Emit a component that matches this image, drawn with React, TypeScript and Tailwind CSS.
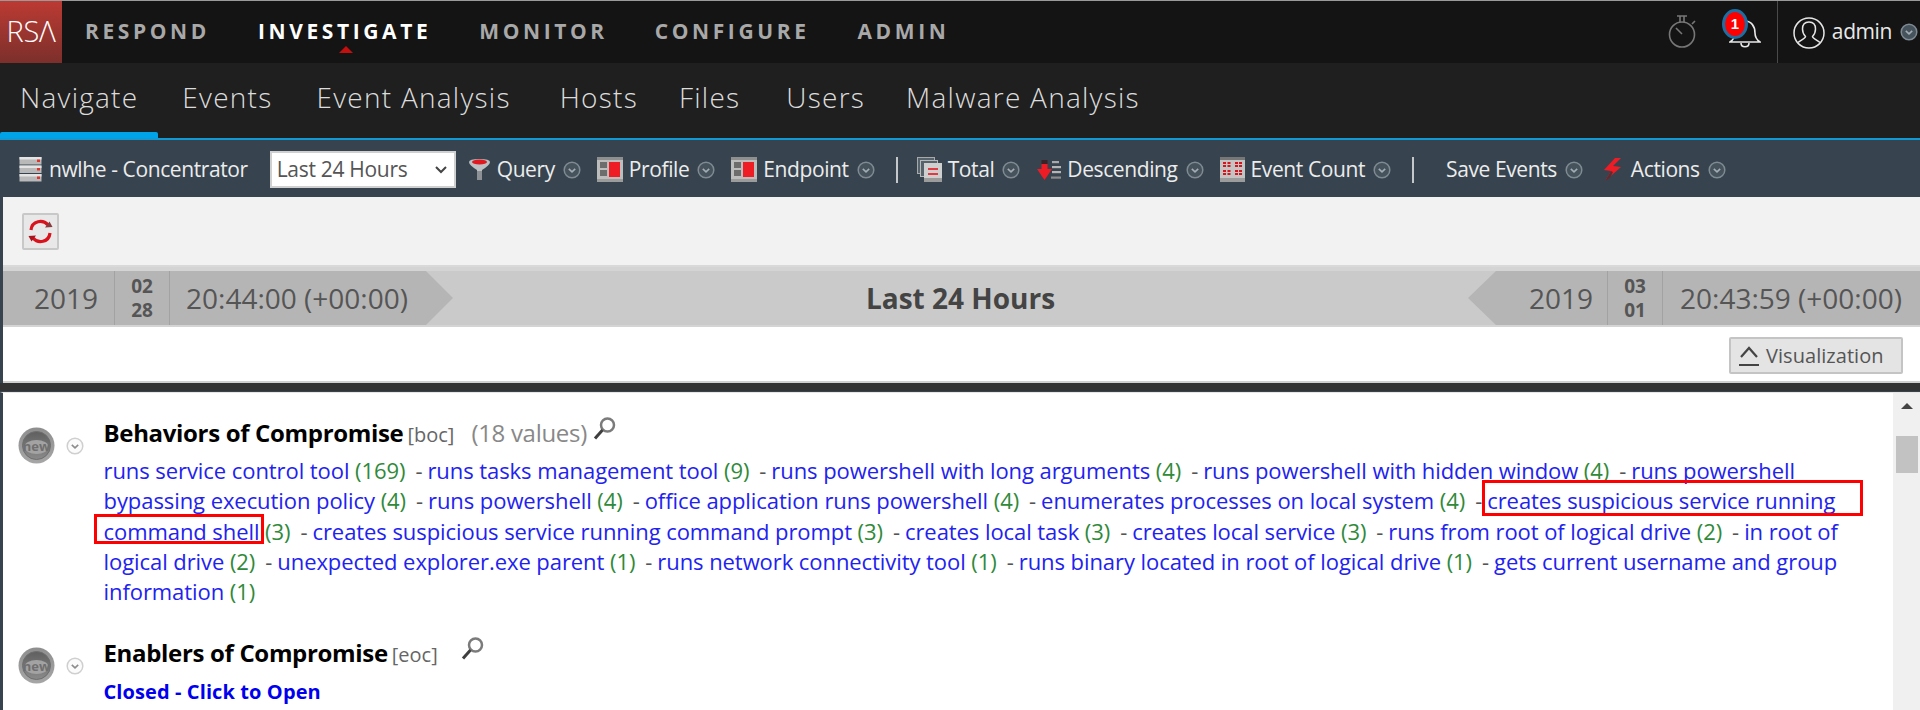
import React from "react";

const Chev = ({ dark = false, cls = "" }: { dark?: boolean; cls?: string }) => (
  <svg width="18" height="18" viewBox="0 0 18 18" className={"shrink-0 " + cls}>
    <circle cx="9" cy="9" r="7.8" fill={dark ? "#46525c" : "#fbfbfb"} stroke={dark ? "#7f8a93" : "#cfcfcf"} strokeWidth="1.5" />
    <path d="M5.8 7.8 9 10.800l3.200-3" fill="none" stroke={dark ? "#a3adb5" : "#8c8c8c"} strokeWidth="1.6" />
  </svg>
);

const ServerIcon = () => (
  <svg width="23" height="25" viewBox="0 0 23 25" className="shrink-0">
    {[0, 8.5, 17].map((y) => (
      <g key={y}>
        <rect x="0.5" y={y} width="22" height="7.5" fill="#b9b9b9" />
        <rect x="0.5" y={y} width="22" height="2.5" fill="#e4e4e4" />
        <rect x="18" y={y + 2.5} width="3" height="2.5" fill="#e2342c" />
      </g>
    ))}
  </svg>
);
const FunnelIcon = () => (
  <svg width="23" height="23" viewBox="0 0 23 23" className="shrink-0">
    <path d="M1 4Q1 1 11.500 1T22 4Q22 7 14 12V22H9V12Q1 7 1 4Z" fill="#bcc0c3" />
    <ellipse cx="11.500" cy="4" rx="7.500" ry="2.500" fill="#e0181f" />
    <path d="M9 13h5v9H9Z" fill="#8d9094" />
  </svg>
);
const PanelIcon = () => (
  <svg width="26" height="25" viewBox="0 0 26 25" className="shrink-0">
    <rect width="26" height="25" rx="1" fill="#bdbdbd" />
    <rect width="26" height="3" fill="#8f8f8f" />
    <rect x="3" y="5" width="7" height="6" fill="#6d6d6d" />
    <rect x="3" y="13" width="7" height="6" fill="#6d6d6d" />
    <rect x="12" y="5" width="11" height="15" fill="#ee1c25" />
    <rect y="22" width="26" height="3" fill="#9c9c9c" />
  </svg>
);
const TotalIcon = () => (
  <svg width="25" height="25" viewBox="0 0 25 25" className="shrink-0">
    <rect x="0.500" y="0.500" width="17" height="16" fill="#56626c" stroke="#a9a9a9" />
    <rect x="3.500" y="3.500" width="17" height="16" fill="#56626c" stroke="#b9b9b9" />
    <rect x="7" y="6" width="18" height="19" fill="#cfcfcf" />
    <rect x="11" y="11" width="10" height="2" fill="#e23a42" />
    <rect x="11" y="16" width="10" height="2" fill="#e23a42" />
    <rect x="7" y="21" width="18" height="4" fill="#9c9c9c" />
  </svg>
);
const SortIcon = () => (
  <svg width="24" height="20" viewBox="0 0 24 20" className="shrink-0">
    <rect x="4.500" y="0" width="6" height="4" fill="#3b2226" />
    <rect x="4.500" y="4" width="6" height="6" fill="#ee1c25" />
    <path d="M0 9h15L7.500 20Z" fill="#ee1c25" />
    <rect x="15" y="1" width="7" height="2.200" fill="#a9a9a9" />
    <rect x="15" y="6" width="9" height="2.200" fill="#b5b5b5" />
    <rect x="15" y="11" width="9" height="2.200" fill="#b5b5b5" />
    <rect x="14" y="16.500" width="10" height="2.200" fill="#8b8b8b" />
  </svg>
);
const CountIcon = () => (
  <svg width="25" height="25" viewBox="0 0 25 25" className="shrink-0">
    <rect width="25" height="25" rx="1" fill="#c4c4c4" />
    <rect width="25" height="3" fill="#777" />
    {[5, 8, 13, 16].map((y) =>
      [3, 7.500, 15, 19].map((x) => <rect key={x + "-" + y} x={x} y={y} width="3" height="2" fill="#d7131c" />)
    )}
    <rect y="21" width="25" height="4" fill="#9c9c9c" />
  </svg>
);
const BoltIcon = () => (
  <svg width="24" height="24" viewBox="0 0 24 24" className="shrink-0">
    <path d="M14 0 3 12l7 1-6 10 16-14-8-1 8-8Z" fill="#ee1c25" />
    <path d="M10 13 4 23l5-3 3-6Z" fill="#5d2c31" />
  </svg>
);
const Magnifier = ({ cls = "" }: { cls?: string }) => (
  <svg width="24" height="25" viewBox="0 0 24 25" className={"shrink-0 " + cls}>
    <circle cx="14.500" cy="9" r="6.500" fill="#fff" stroke="#7b7b7b" strokeWidth="2.500" />
    <path d="M9.500 14 2 22.500" stroke="#3f3f3f" strokeWidth="3" />
  </svg>
);
const Sphere = ({ id }: { id: string }) => (
  <svg width="37" height="37" viewBox="0 0 37 37" className="shrink-0">
    <defs>
      <linearGradient id={id + "a"} x1="0" y1="0" x2="0" y2="1">
        <stop offset="0%" stopColor="#8e8e8e" />
        <stop offset="100%" stopColor="#a6a6a6" />
      </linearGradient>
      <linearGradient id={id + "b"} x1="0" y1="0" x2="0" y2="1">
        <stop offset="0%" stopColor="#5f5f5f" />
        <stop offset="100%" stopColor="#8a8a8a" />
      </linearGradient>
    </defs>
    <circle cx="18.500" cy="18.500" r="18" fill={"url(#" + id + "a)"} />
    <circle cx="18.500" cy="18.500" r="14" fill={"url(#" + id + "b)"} stroke="#6e6e6e" strokeWidth="1" />
    <ellipse cx="18.500" cy="20" rx="12" ry="7" fill="#a3a3a3" />
    <text x="18.500" y="24" textAnchor="middle" fontSize="13" fontWeight="700" fill="#6f6f6f" fontFamily="Open Sans, sans-serif">
      new
    </text>
  </svg>
);

type TB = { ml: string; icon?: React.ReactNode; label: string };
const Tool = ({ ml, icon, label }: TB) => (
  <div className={"flex items-center shrink-0 " + ml}>
    {icon}
    <span className={"text-[21px] tracking-[-0.4px] text-[#ececec] " + (icon ? "ml-[6px]" : "")}>{label}</span>
    <Chev dark cls="ml-[8px]" />
  </div>
);

const Blue = ({ children }: { children: React.ReactNode }) => <span className="text-[#2222f0]">{children}</span>;
const Count = ({ children }: { children: React.ReactNode }) => <span className="text-[#2f8a3a]">{children}</span>;
const Dash = () => <span className="text-[#555555] ml-[10px] mr-[5px]">-</span>;
const Item = ({ t, n, last = false }: { t: string; n: number; last?: boolean }) => (
  <>
    <Blue>{t}</Blue> <Count>({n})</Count>
    {!last && <Dash />}
  </>
);

const Section = ({ id, children }: { id: string; children: React.ReactNode }) => (
  <div className="flex">
    <div className="w-[37px] ml-[18px] shrink-0 flex items-start">
      <Sphere id={id} />
    </div>
    <div className="w-[18px] ml-[11px] shrink-0 pt-[10px]">
      <Chev />
    </div>
    <div className="ml-[19.5px] flex-1 min-w-0">{children}</div>
  </div>
);

export default function App() {
  return (
    <div className="w-[1920px] h-[710px] overflow-hidden flex flex-col bg-white font-['Open_Sans',sans-serif]">
      {/* top bar */}
      <header className="h-[63px] shrink-0 flex items-center bg-[#141414] border-t border-t-[#9a9a9a]">
        <div className="w-[62px] h-full flex items-center justify-center pb-[3px] bg-gradient-to-b from-[#bc3a33] to-[#7c2f2b] text-white text-[29px] font-light tracking-[-0.3px]">
          RSΛ
        </div>
        <nav className="flex items-center font-bold text-[21px] tracking-[3.6px] text-[#a8a8a8]">
          <span className="ml-[23px]">RESPOND</span>
          <span className="ml-[48px] relative text-white">
            INVESTIGATE
            <span className="absolute left-[81px] top-[30px] w-0 h-0 border-x-[7px] border-x-transparent border-b-[7px] border-b-[#c40f0f]" />
          </span>
          <span className="ml-[48px]">MONITOR</span>
          <span className="ml-[47px]">CONFIGURE</span>
          <span className="ml-[48px]">ADMIN</span>
        </nav>
        <div className="ml-auto flex items-center h-full">
          <svg width="28" height="33" viewBox="0 0 28 33" className="mr-[26px] -mt-[1px]">
            <circle cx="14" cy="19.500" r="12.500" fill="none" stroke="#777" strokeWidth="1.600" />
            <path d="M9 1h10M12 1v6M16 1v6M24 9l3-3M14 19 8 13" fill="none" stroke="#777" strokeWidth="1.600" />
          </svg>
          <div className="relative w-[55px] h-full">
            <svg width="32" height="28" viewBox="0 0 32 28" className="absolute left-[7px] top-[19px]">
              <path d="M1 22h30c-3-2-5-4-5-9 0-7-4-12-10-12S6 6 6 13c0 5-2 7-5 9ZM12 23c0 5 8 5 8 0" fill="none" stroke="#e8e8e8" strokeWidth="1.600" />
            </svg>
            <span className="absolute left-0 top-[8px] w-[26px] h-[30px] rounded-[50%] bg-[#ff0000] border-[3px] border-[#1d6fa3] flex items-center justify-center text-white text-[15px] font-bold font-['Liberation_Sans',sans-serif]">
              1
            </span>
          </div>
          <div className="w-px h-full bg-[#4a4a4a]" />
          <svg width="32" height="32" viewBox="0 0 32 32" className="ml-[15px] mt-[1px]">
            <circle cx="16" cy="16" r="15" fill="none" stroke="#e6e6e6" strokeWidth="1.500" />
            <path d="M16 5c-4.500 0-6.500 3-6.500 7 0 3.500 1.500 6 3 7.500 0 1.500-3 3-7.500 6M16 5c4.500 0 6.500 3 6.500 7 0 3.500-1.500 6-3 7.500 0 1.500 3 3 7.500 6" fill="none" stroke="#e6e6e6" strokeWidth="1.500" />
          </svg>
          <span className="ml-[7px] text-[21px] tracking-[-0.4px] text-[#e8e8e8]">admin</span>
          <Chev dark cls="ml-[8px] mr-[2px]" />
        </div>
      </header>

      {/* sub nav */}
      <div className="h-[75px] shrink-0 flex items-center pb-[7px] bg-[#1f1f1f] relative text-[28px] font-light tracking-[1.25px] text-[#dcdcdc]">
        <span className="ml-[20px]">Navigate</span>
        <span className="ml-[44px]">Events</span>
        <span className="ml-[44px]">Event Analysis</span>
        <span className="ml-[49px]">Hosts</span>
        <span className="ml-[41px]">Files</span>
        <span className="ml-[46px]">Users</span>
        <span className="ml-[41px]">Malware Analysis</span>
        <span className="absolute left-0 bottom-0 w-[158px] h-[6px] bg-[#00a3e8] rounded-t-[2px]" />
      </div>
      <div className="h-[2px] shrink-0 bg-[#0f9ad6]" />

      {/* toolbar */}
      <div className="h-[56px] shrink-0 flex items-center pt-[3px] bg-[#37444f]">
        <div className="ml-[19px] flex items-center shrink-0">
          <ServerIcon />
          <span className="ml-[7px] text-[21px] tracking-[-0.4px] text-[#ececec]">nwlhe - Concentrator</span>
        </div>
        <div className="ml-[22px] w-[186px] h-[37px] shrink-0 relative">
          <select
            defaultValue="Last 24 Hours"
            className="w-full h-full appearance-none bg-white border-2 border-[#d0d0d0] pl-[5px] text-[21px] tracking-[-0.3px] text-[#555555] outline-none"
          >
            <option>Last 24 Hours</option>
          </select>
          <svg width="12" height="8" viewBox="0 0 12 8" className="absolute right-[9px] top-[15px] pointer-events-none">
            <path d="M1 1l5 5 5-5" fill="none" stroke="#444" strokeWidth="2" />
          </svg>
        </div>
        <Tool ml="ml-[12px]" icon={<FunnelIcon />} label="Query" />
        <Tool ml="ml-[16px]" icon={<PanelIcon />} label="Profile" />
        <Tool ml="ml-[16px]" icon={<PanelIcon />} label="Endpoint" />
        <div className="ml-[21px] w-[2px] h-[26px] bg-[#c4c8cb] shrink-0" />
        <Tool ml="ml-[19px]" icon={<TotalIcon />} label="Total" />
        <Tool ml="ml-[17px]" icon={<SortIcon />} label="Descending" />
        <Tool ml="ml-[16px]" icon={<CountIcon />} label="Event Count" />
        <div className="ml-[21px] w-[2px] h-[26px] bg-[#c4c8cb] shrink-0" />
        <Tool ml="ml-[32px]" label="Save Events" />
        <Tool ml="ml-[18px]" icon={<BoltIcon />} label="Actions" />
      </div>

      {/* time panel */}
      <div className="h-[197px] shrink-0 flex flex-col bg-[#37444f] pl-[3px]">
        <div className="h-[1px] shrink-0" />
        <div className="h-[70px] shrink-0 bg-[#f2f2f2] flex items-start pl-[19px] pt-[16px] border-b-2 border-b-[#d9d9d9]">
          <button className="w-[37px] h-[37px] bg-[#e8e8e8] border-2 border-[#c8c8c8] rounded-[2px] flex items-center justify-center">
            <svg width="25" height="25" viewBox="0 0 25 25" className="shrink-0">
              <path d="M3 11C4 1.500 15 0 20 6" fill="none" stroke="#d9121c" strokeWidth="3.200" />
              <path d="M17 8.500 24.500 8 21.500 2.500Z" fill="#8a3a3e" />
              <path d="M22 14C21 23.500 10 25 5 19" fill="none" stroke="#d9121c" strokeWidth="3.200" />
              <path d="M8 16.500.5 17l3 5.500Z" fill="#a8141c" />
            </svg>
          </button>
        </div>
        <div className="h-[60px] shrink-0 bg-[#cacaca] flex items-stretch border-t-[4px] border-t-[#d4d4d4] border-b-2 border-b-[#d4d4d4] text-[#555555] text-[28px]">
          <div className="flex items-center bg-[#b5b5b5]">
            <div className="w-[112px] h-full flex items-center justify-end pr-[16px] border-r border-r-[#a2a2a2]">2019</div>
            <div className="w-[55px] h-full flex flex-col items-center justify-center border-r border-r-[#a2a2a2] text-[19px] leading-[24px] font-bold text-[#555555]">
              <span>02</span>
              <span>28</span>
            </div>
            <div className="w-[256px] h-full flex items-center pl-[16px] whitespace-nowrap">20:44:00 (+00:00)</div>
          </div>
          <div className="w-0 h-0 border-y-[27px] border-y-transparent border-l-[27px] border-l-[#b5b5b5]" />
          <div className="flex-1 flex items-center justify-center font-bold text-[28px] text-[#444444]">Last 24 Hours</div>
          <div className="w-0 h-0 border-y-[27px] border-y-transparent border-r-[28px] border-r-[#b5b5b5]" />
          <div className="flex items-center bg-[#b5b5b5]">
            <div className="w-[112px] h-full flex items-center justify-end pr-[14px] border-r border-r-[#a2a2a2]">2019</div>
            <div className="w-[55px] h-full flex flex-col items-center justify-center border-r border-r-[#a2a2a2] text-[19px] leading-[24px] font-bold text-[#555555]">
              <span>03</span>
              <span>01</span>
            </div>
            <div className="w-[257px] h-full flex items-center pl-[17px] whitespace-nowrap">20:43:59 (+00:00)</div>
          </div>
        </div>
        <div className="h-[56px] shrink-0 bg-white flex items-start justify-end pr-[17px] pt-[10px] border-b-2 border-b-[#d0d0d0]">
          <button className="w-[174px] h-[37px] bg-[#e4e4e4] border-2 border-[#c4c4c4] rounded-[2px] flex items-center pl-[6px] text-[#555555] text-[20px] tracking-[0.05px]">
            <svg width="24" height="24" viewBox="0 0 24 24" className="shrink-0">
              <path d="M4 13 12 4l8 9" fill="none" stroke="#444" strokeWidth="2.200" />
              <path d="M2 21h20" stroke="#444" strokeWidth="2" />
            </svg>
            <span className="ml-[5px]">Visualization</span>
          </button>
        </div>
        <div className="h-[8px] shrink-0 -ml-[3px] bg-[#333333]" />
      </div>

      {/* content */}
      <div className="flex-1 min-h-0 flex relative border-l-[3px] border-l-[#37444f] -mt-[1px] border-t border-t-[#e6e6e6]">
        <div className="flex-1 min-w-0 pt-[34px] -ml-[3px]">
          <Section id="s1">
            <div className="flex items-center h-[30px] whitespace-nowrap -mt-[9px]">
              <span className="text-[24px] font-bold tracking-[-0.33px] text-black">Behaviors of Compromise</span>
              <span className="ml-[4px] text-[20px] text-[#666666] mt-[3px]">[boc]</span>
              <span className="ml-[17px] text-[24px] tracking-[-0.3px] text-[#888888]">(18 values)</span>
              <Magnifier cls="ml-[6px] -mt-[10px]" />
            </div>
            <p className="mt-[7px] text-[22px] leading-[30.3px] tracking-[-0.07px] whitespace-nowrap">
              <Item t="runs service control tool" n={169} />
              <Item t="runs tasks management tool" n={9} />
              <Item t="runs powershell with long arguments" n={4} />
              <Item t="runs powershell with hidden window" n={4} />
              <Blue>runs powershell</Blue>
              <br />
              <Item t="bypassing execution policy" n={4} />
              <Item t="runs powershell" n={4} />
              <Item t="office application runs powershell" n={4} />
              <Item t="enumerates processes on local system" n={4} />
              <Blue>creates suspicious service running</Blue>
              <br />
              <Blue>command shell</Blue> <Count>(3)</Count>
              <Dash />
              <Item t="creates suspicious service running command prompt" n={3} />
              <Item t="creates local task" n={3} />
              <Item t="creates local service" n={3} />
              <Item t="runs from root of logical drive" n={2} />
              <Blue>in root of</Blue>
              <br />
              <Item t="logical drive" n={2} />
              <Item t="unexpected explorer.exe parent" n={1} />
              <Item t="runs network connectivity tool" n={1} />
              <Item t="runs binary located in root of logical drive" n={1} />
              <Blue>gets current username and group</Blue>
              <br />
              <Item t="information" n={1} last />
            </p>
          </Section>
          <div className="mt-[41px]">
            <Section id="s2">
              <div className="flex items-center h-[30px] whitespace-nowrap -mt-[9px]">
                <span className="text-[24px] font-bold tracking-[-0.33px] text-black">Enablers of Compromise</span>
                <span className="ml-[4px] text-[20px] text-[#666666] mt-[3px]">[eoc]</span>
                <Magnifier cls="ml-[23px] -mt-[10px]" />
              </div>
              <p className="mt-[9px] text-[20px] leading-[30px] tracking-[0.1px] font-bold text-[#0000ee]">Closed - Click to Open</p>
            </Section>
          </div>
        </div>
        <div className="w-[27px] shrink-0 bg-[#f0f0f0] flex flex-col items-center">
          <div className="mt-[10px] w-0 h-0 border-x-[6px] border-x-transparent border-b-[6px] border-b-[#444444]" />
          <div className="mt-[27px] w-[22px] h-[37px] bg-[#c2c2c2]" />
        </div>
        {/* annotation boxes */}
        <div className="absolute left-[91px] top-[121px] w-[170px] h-[30px] border-[3px] border-[#ff0000]" />
        <div className="absolute left-[1479px] top-[87px] w-[381px] h-[36px] border-[3px] border-[#ff0000]" />
      </div>
    </div>
  );
}
